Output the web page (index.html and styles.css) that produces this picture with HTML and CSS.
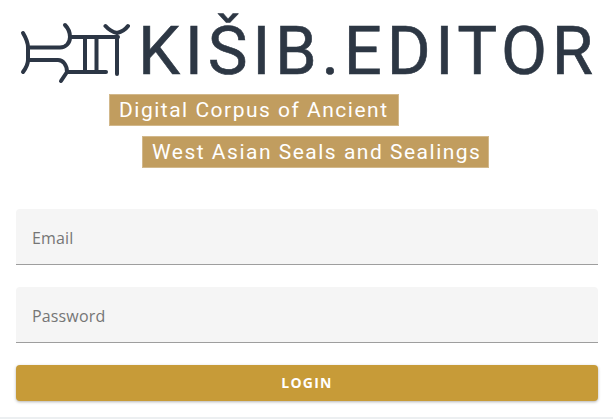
FILE: index.html
```html
<!DOCTYPE html>
<html lang="en">
<head>
  <meta charset="UTF-8">
  <title>KISIB.EDITOR Login</title>
  <link rel="stylesheet" href="styles.css">
</head>
<body>
  <div class="logo">
    <svg class="logo-icon" width="110" height="62" viewBox="20 22 110 62" fill="none" stroke="#2c3645" stroke-width="4" stroke-linecap="round" stroke-linejoin="round">
      <path d="M23 33 C26 38 28 42 28 47.500 L28 60 C28 64 26 68 23 72"/>
      <path d="M28 47.500 L60 47.500 C66 47.500 70 43 70 37 C70 32 68 28 65 25"/>
      <path d="M70 37 L118 37"/>
      <path d="M28 60 L58 60 C63 60 67 65 67 72 L61 81"/>
      <path d="M67 72 L106 72"/>
      <path d="M85 37 L85 72"/>
      <path d="M96.500 37 L96.500 72"/>
      <path d="M117 37 L117 74"/>
      <path d="M105.500 26 C109 30 113 32 117 33 C121 32 125 30 128 26"/>
    </svg>
    <span class="logo-text">KIŠIB.EDITOR</span>
  </div>
  <div class="tagline">
    <div class="tag tag-first">Digital Corpus of Ancient</div>
    <div class="tag tag-second">West Asian Seals and Sealings</div>
  </div>
  <form class="login-form">
    <div class="field">Email</div>
    <div class="field">Password</div>
    <button type="button" class="login-btn">Login</button>
  </form>
  <div class="bottom-band"></div>
</body>
</html>
```

FILE: styles.css
```css
body {
  margin: 0;
  height: 419px;
  overflow: hidden;
  background-color: #fff;
  font-family: "Open Sans", sans-serif;
  display: flex;
  flex-direction: column;
}
.logo {
  display: flex;
  align-items: flex-start;
  height: 94px;
  padding: 22px 0 0 20px;
  box-sizing: border-box;
}
.logo-icon {
  flex-shrink: 0;
}
.logo-text {
  margin-left: 8px;
  font-family: Roboto, sans-serif;
  font-size: 67px;
  line-height: 58px;
  letter-spacing: 4.7px;
  color: #2d3744;
  -webkit-text-stroke: 0.6px #2d3744;
  white-space: nowrap;
}
.tagline {
  display: flex;
  flex-direction: column;
  align-items: flex-start;
  gap: 10px;
}
.tag {
  height: 32px;
  box-sizing: border-box;
  line-height: 30px;
  background-color: #c19d5f;
  border: 1px solid #d2b88b;
  color: #fff;
  font-family: Roboto, sans-serif;
  font-size: 21px;
  letter-spacing: 1.5px;
  padding: 0 9px;
  white-space: nowrap;
}
.tag-first {
  margin-left: 109px;
}
.tag-second {
  margin-left: 142px;
  padding-right: 7px;
}
.login-form {
  display: flex;
  flex-direction: column;
  margin: 41px 15px 0 16px;
}
.field {
  height: 56px;
  box-sizing: border-box;
  margin-bottom: 22px;
  padding: 0 16px;
  line-height: 58px;
  font-size: 16px;
  letter-spacing: 0.15px;
  color: #757575;
  background-color: #f5f5f5;
  border-bottom: 1px solid #9e9e9e;
  border-radius: 4px 4px 0 0;
}
.login-btn {
  height: 36px;
  padding: 0 0 2px;
  border: none;
  border-radius: 4px;
  background-color: #c79b38;
  color: #fff;
  font-family: "Open Sans", sans-serif;
  font-size: 14px;
  font-weight: 700;
  letter-spacing: 1.25px;
  text-transform: uppercase;
  box-shadow: 0 1px 3px rgba(0, 0, 0, 0.3);
}
.bottom-band {
  margin-top: auto;
  height: 2px;
  background-color: #eceff1;
}
```
